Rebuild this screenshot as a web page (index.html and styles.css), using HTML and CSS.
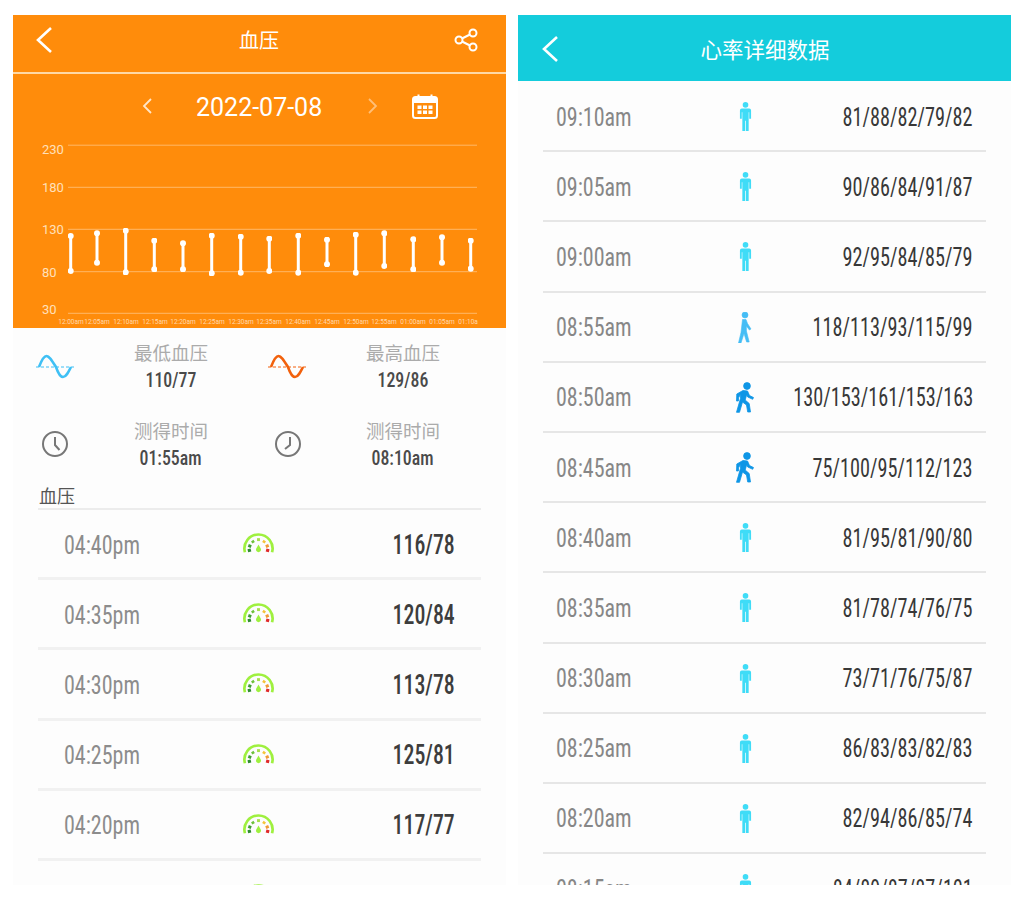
FILE: index.html
```html
<!DOCTYPE html>
<html lang="zh">
<head>
<meta charset="utf-8">
<title>血压</title>
<link rel="stylesheet" href="styles.css">
</head>
<body>
<svg class="defs" width="0" height="0">
  <defs>
    <marker id="dot" viewBox="0 0 6 6" refX="3" refY="3" markerWidth="6" markerHeight="6" markerUnits="userSpaceOnUse">
      <circle cx="3" cy="3" r="3" fill="#fff"/>
    </marker>
    <symbol id="gauge" viewBox="0 0 34 22">
      <path d="M3 20A14.500 14.500 0 1 1 31 20" fill="none" stroke="#9ff03f" stroke-width="2.800"/>
      <path d="M17 5.500v3" stroke="#a6e04a" stroke-width="3"/>
      <path d="M10.500 8l1.500 2.200" stroke="#6fc23a" stroke-width="3"/>
      <path d="M23.500 8l-1.500 2.200" stroke="#f5c33a" stroke-width="3"/>
      <path d="M6.500 13l3 1.200" stroke="#3f9e35" stroke-width="3"/>
      <path d="M27.500 13l-3 1.200" stroke="#f09a35" stroke-width="3"/>
      <path d="M6 18.500l3.200-.8" stroke="#2f8a30" stroke-width="3"/>
      <path d="M28 18.500l-3.200-.8" stroke="#e02a2a" stroke-width="3"/>
      <path d="M17 12l2.400 4.400a2.600 2.600 0 1 1-4.800 0z" fill="#9ff03f"/>
    </symbol>
    <symbol id="stand" viewBox="0 0 14 31">
      <circle cx="7" cy="3" r="3"/>
      <path d="M3 7h8a2 2 0 0 1 2 2v9h-2v-7h-.6v20H7.400V20H6.600v11H3.600V11H3v7H1V9a2 2 0 0 1 2-2z"/>
    </symbol>
    <symbol id="walk" viewBox="0 0 16 31">
      <circle cx="8" cy="3" r="3"/>
      <path d="M5.500 7.500h3.500l1.500 4 3.500 5.500-1.600 1-3-4v5l2.800 11h-2.600L7 21.500 4 31H1.500L4 20.500z"/>
    </symbol>
    <symbol id="run" viewBox="0 0 20 31">
      <circle cx="12" cy="4" r="3.400"/>
      <path d="M8 8.500l4.500.5 2 4.500 4 2-.8 1.800-5-2.300-1-2.300-1.500 5.300 4 3.500 1.300 8.500h-2.800l-1.200-7-4-3-3 10.300H1.500l4-14-.2-3.800-1.700 3.300-.2 3.200H1.500L1.800 12z"/>
    </symbol>
  </defs>
</svg>

<main class="page">
  <section class="panel">
    <header class="top top-orange">
      <svg class="back" viewBox="0 0 18 28" aria-hidden="true"><path d="M16 2L3 14l13 12" /></svg>
      <h1 class="top-title">血压</h1>
      <svg class="share" viewBox="0 0 24 24" aria-hidden="true">
        <circle cx="5" cy="12" r="3.500"/><circle cx="19" cy="5" r="3.500"/><circle cx="19" cy="19" r="3.500"/>
        <path d="M8 10.500l8-4M8 13.500l8 4"/>
      </svg>
    </header>
    <div class="date-row">
      <svg class="chev" viewBox="0 0 12 18" aria-hidden="true"><path d="M10 2L3 9l7 7"/></svg>
      <span class="date">2022-07-08</span>
      <svg class="chev chev-next" viewBox="0 0 12 18" aria-hidden="true"><path d="M2 2l7 7-7 7"/></svg>
      <svg class="cal" viewBox="0 0 26 25" aria-hidden="true">
        <rect class="cal-body" x="1" y="3" width="24" height="21" rx="2.500"/>
        <path class="cal-head" d="M1 5.500A2.500 2.500 0 0 1 3.500 3H22.500A2.500 2.500 0 0 1 25 5.500V9H1z"/>
        <path class="cal-ring" d="M6.500 0.500v3.500M19.500 0.500v3.500"/>
        <path class="cal-dots" d="M5.500 11.500h4v3.500h-4zM11 11.500h4v3.500h-4zM16.500 11.500h4v3.500h-4zM5.500 16.500h4v3.500h-4zM11 16.500h4v3.500h-4zM16.500 16.500h4v3.500h-4z"/>
      </svg>
    </div>
    <svg class="chart" viewBox="13 138 493 190" aria-hidden="true">
      <g class="grid">
        <path d="M68 145.200H477"/><path d="M68 187.300H477"/><path d="M68 229.300H477"/><path d="M68 271.700H477"/><path d="M68 313.300H477"/>
      </g>
      <g class="y-labels">
        <text x="42" y="154">230</text><text x="42" y="192">180</text><text x="42" y="234">130</text><text x="42" y="277">80</text><text x="42" y="314">30</text>
      </g>
      <g class="bars">
        <path d="M70.700 236V271"/><path d="M97 233.300V262.700"/><path d="M125.700 230.700V272.300"/><path d="M154.300 240.700V269.300"/><path d="M183 243.300V269.300"/>
        <path d="M211.700 235.700V273.300"/><path d="M240.700 236.700V272.700"/><path d="M269.300 238.700V271"/><path d="M298.300 235.700V272.700"/><path d="M327 239.700V264.300"/>
        <path d="M355.700 234.700V272.700"/><path d="M384.300 233.300V266"/><path d="M413.300 239.300V269.300"/><path d="M442 237.300V262.700"/><path d="M470.700 240.700V268.700"/>
      </g>
      <g class="x-labels">
        <text x="71" y="324">12:00am</text><text x="97" y="324">12:05am</text><text x="126" y="324">12:10am</text><text x="155" y="324">12:15am</text><text x="183" y="324">12:20am</text>
        <text x="212" y="324">12:25am</text><text x="241" y="324">12:30am</text><text x="269" y="324">12:35am</text><text x="298" y="324">12:40am</text><text x="327" y="324">12:45am</text>
        <text x="356" y="324">12:50am</text><text x="384" y="324">12:55am</text><text x="413" y="324">01:00am</text><text x="442" y="324">01:05am</text><text x="468" y="324">01:10a</text>
      </g>
    </svg>

    <div class="summary">
      <div class="stat">
        <svg class="stat-icon wave-low" viewBox="0 0 40 26" aria-hidden="true">
          <path class="wave" d="M3 13C6 5 8 2 10.500 2S15 5 20 13C22 19 24 23 27 23S32 19 35 13"/>
          <path class="wave-axis" d="M0 13H40"/>
        </svg>
        <div class="stat-text"><p class="stat-label">最低血压</p><p class="stat-value"><span class="narrow">110/77</span></p></div>
      </div>
      <div class="stat">
        <svg class="stat-icon wave-high" viewBox="0 0 40 26" aria-hidden="true">
          <path class="wave" d="M3 13C6 5 8 2 10.500 2S15 5 20 13C22 19 24 23 27 23S32 19 35 13"/>
          <path class="wave-axis" d="M0 13H40"/>
        </svg>
        <div class="stat-text"><p class="stat-label">最高血压</p><p class="stat-value"><span class="narrow">129/86</span></p></div>
      </div>
      <div class="stat">
        <svg class="stat-icon clock" viewBox="0 0 40 26" aria-hidden="true">
          <circle cx="19" cy="13" r="12"/><path d="M19 6v8l4.500 5"/>
        </svg>
        <div class="stat-text"><p class="stat-label">测得时间</p><p class="stat-value"><span class="narrow">01:55am</span></p></div>
      </div>
      <div class="stat">
        <svg class="stat-icon clock" viewBox="0 0 40 26" aria-hidden="true">
          <circle cx="20" cy="13" r="12"/><path d="M22 6v8l-5 4"/>
        </svg>
        <div class="stat-text"><p class="stat-label">测得时间</p><p class="stat-value"><span class="narrow">08:10am</span></p></div>
      </div>
    </div>

    <h2 class="list-title">血压</h2>
    <ul class="bp-list">
      <li class="bp-row"><span class="bp-time">04:40pm</span><svg class="gauge"><use href="#gauge"/></svg><span class="bp-val">116/78</span></li>
      <li class="bp-row"><span class="bp-time">04:35pm</span><svg class="gauge"><use href="#gauge"/></svg><span class="bp-val">120/84</span></li>
      <li class="bp-row"><span class="bp-time">04:30pm</span><svg class="gauge"><use href="#gauge"/></svg><span class="bp-val">113/78</span></li>
      <li class="bp-row"><span class="bp-time">04:25pm</span><svg class="gauge"><use href="#gauge"/></svg><span class="bp-val">125/81</span></li>
      <li class="bp-row"><span class="bp-time">04:20pm</span><svg class="gauge"><use href="#gauge"/></svg><span class="bp-val">117/77</span></li>
      <li class="bp-row"><span class="bp-time">04:15pm</span><svg class="gauge"><use href="#gauge"/></svg><span class="bp-val">118/79</span></li>
    </ul>
  </section>

  <section class="panel">
    <header class="top top-cyan">
      <svg class="back" viewBox="0 0 18 28" aria-hidden="true"><path d="M16 2L3 14l13 12"/></svg>
      <h1 class="top-title">心率详细数据</h1>
    </header>
    <ul class="hr-list">
      <li class="hr-row"><span class="hr-time">09:10am</span><svg class="act act-stand"><use href="#stand"/></svg><span class="hr-val">81/88/82/79/82</span></li>
      <li class="hr-row"><span class="hr-time">09:05am</span><svg class="act act-stand"><use href="#stand"/></svg><span class="hr-val">90/86/84/91/87</span></li>
      <li class="hr-row"><span class="hr-time">09:00am</span><svg class="act act-stand"><use href="#stand"/></svg><span class="hr-val">92/95/84/85/79</span></li>
      <li class="hr-row"><span class="hr-time">08:55am</span><svg class="act act-walk"><use href="#walk"/></svg><span class="hr-val">118/113/93/115/99</span></li>
      <li class="hr-row"><span class="hr-time">08:50am</span><svg class="act act-run"><use href="#run"/></svg><span class="hr-val">130/153/161/153/163</span></li>
      <li class="hr-row"><span class="hr-time">08:45am</span><svg class="act act-run"><use href="#run"/></svg><span class="hr-val">75/100/95/112/123</span></li>
      <li class="hr-row"><span class="hr-time">08:40am</span><svg class="act act-stand"><use href="#stand"/></svg><span class="hr-val">81/95/81/90/80</span></li>
      <li class="hr-row"><span class="hr-time">08:35am</span><svg class="act act-stand"><use href="#stand"/></svg><span class="hr-val">81/78/74/76/75</span></li>
      <li class="hr-row"><span class="hr-time">08:30am</span><svg class="act act-stand"><use href="#stand"/></svg><span class="hr-val">73/71/76/75/87</span></li>
      <li class="hr-row"><span class="hr-time">08:25am</span><svg class="act act-stand"><use href="#stand"/></svg><span class="hr-val">86/83/83/82/83</span></li>
      <li class="hr-row"><span class="hr-time">08:20am</span><svg class="act act-stand"><use href="#stand"/></svg><span class="hr-val">82/94/86/85/74</span></li>
      <li class="hr-row"><span class="hr-time">08:15am</span><svg class="act act-stand"><use href="#stand"/></svg><span class="hr-val">84/89/87/87/101</span></li>
    </ul>
  </section>
</main>
</body>
</html>
```

FILE: styles.css
```css
* { box-sizing: border-box; }
html, body { margin: 0; padding: 0; background: #fff; }
body {
  font-family: "Roboto", "Noto Sans CJK SC", sans-serif;
  width: 1024px;
  height: 900px;
  overflow: hidden;
}
h1, h2, p, ul { margin: 0; padding: 0; font-weight: 400; }
ul { list-style: none; }
.defs { position: absolute; }

.page {
  display: flex;
  gap: 12px;
  padding: 15px 13px;
}
.panel {
  width: 493px;
  height: 870px;
  flex: none;
  overflow: hidden;
  background: #fdfdfd;
}

/* headers */
.top {
  display: flex;
  align-items: center;
  color: #fff;
}
.top-orange {
  height: 59px;
  padding: 0 28px 7px 22px;
  background: #ff8c0b;
  border-bottom: 2px solid #ffd9a6;
}
.top-orange .back { margin-right: 11px; }
.top-cyan {
  height: 66px;
  padding: 2px 50px 0 23px;
  background: #14ccdc;
}
.back {
  width: 18px;
  height: 28px;
  margin-right: 10px;
  flex: none;
  fill: none;
  stroke: #fff;
  stroke-width: 2.600;
}
.top-title {
  flex: 1;
  text-align: center;
  font-family: "Noto Sans CJK SC", sans-serif;
  font-size: 20px;
  line-height: 28px;
}
.top-cyan .top-title { font-size: 21.500px; }
.share {
  width: 24px;
  height: 24px;
  flex: none;
  fill: none;
  stroke: #fff;
  stroke-width: 2;
}

/* date */
.date-row {
  display: flex;
  align-items: center;
  height: 64px;
  padding-left: 128px;
  background: #ff8c0b;
  color: #fff;
}
.chev {
  width: 12px;
  height: 18px;
  flex: none;
  fill: none;
  stroke: #ffe6c8;
  stroke-width: 1.800;
}
.chev-next { margin: 0 33px 0 45px; stroke: #ffbf78; }
.date {
  width: 126px;
  margin-left: 43px;
  padding-top: 3px;
  font-size: 25px;
  line-height: 30px;
  white-space: nowrap;
}
.cal { width: 26px; height: 25px; flex: none; }
.cal-body { fill: none; stroke: #fff; stroke-width: 2; }
.cal-head { fill: #fff; }
.cal-ring { stroke: #fff; stroke-width: 2; }
.cal-dots { fill: #fff; }

/* chart */
.chart {
  display: block;
  width: 493px;
  height: 190px;
  background: #ff8c0b;
}
.grid path { stroke: #ffb868; stroke-width: 1; }
.y-labels text {
  fill: #ffe0bb;
  font-size: 13px;
  font-family: "Roboto", sans-serif;
}
.bars path {
  fill: none;
  stroke: #fff;
  stroke-width: 3;
  marker-start: url(#dot);
  marker-end: url(#dot);
}
.x-labels text {
  fill: #ffd9ad;
  font-size: 6.500px;
  text-anchor: middle;
  font-family: "Roboto", sans-serif;
}

/* summary */
.summary {
  display: grid;
  grid-template-columns: repeat(2, 232px);
  row-gap: 23px;
  padding: 10px 0 0 23px;
}
.stat {
  display: flex;
  align-items: center;
  height: 55px;
}
.stat-icon {
  width: 40px;
  height: 26px;
  flex: none;
  fill: none;
}
.wave { stroke-width: 2.600; }
.wave-axis { stroke-width: 1; stroke-dasharray: 3 2; }
.wave-low { stroke: #3fc0f5; margin-top: 2px; }
.wave-high { stroke: #f2610c; margin-top: 2px; }
.clock { stroke: #777; stroke-width: 2; }
.stat-text { width: 190px; text-align: center; }
.stat-label {
  font-family: "Noto Sans CJK SC", sans-serif;
  font-size: 18.500px;
  line-height: 28px;
  color: #ababab;
}
.stat-value {
  font-family: "Roboto Condensed", "Roboto", sans-serif;
  font-size: 21px;
  font-weight: 500;
  line-height: 28px;
  color: #4a4a4a;
}
.narrow { display: inline-block; transform: scaleX(.85); }
.list-title {
  margin: 13px 0 0 26px;
  font-family: "Noto Sans CJK SC", sans-serif;
  font-size: 18px;
  line-height: 22px;
  color: #555;
}

/* lists */
.bp-list {
  margin: 2px 25px 0;
  border-top: 2px solid #ececec;
}
.bp-row {
  display: grid;
  grid-template-columns: 178px 32px minmax(0, 1fr);
  align-items: center;
  height: 70.200px;
  padding: 3px 26px 0;
  border-bottom: 3px solid #f1f1f1;
}
.bp-time {
  font-family: "Roboto Condensed", "Roboto", sans-serif;
  font-size: 25px;
  color: #8c8c8c;
  transform: scaleX(.88);
  transform-origin: left center;
  white-space: nowrap;
}
.gauge { width: 33px; height: 23px; margin-bottom: 3px; }
.bp-val {
  justify-self: end;
  margin-bottom: 2px;
  font-family: "Roboto Condensed", "Roboto", sans-serif;
  font-size: 28px;
  font-weight: 500;
  color: #3d3d3d;
  transform: scaleX(.78);
  transform-origin: right center;
  white-space: nowrap;
}
.hr-list { margin: 1px 25px 0; }
.hr-row {
  display: grid;
  grid-template-columns: 170px 38px minmax(0, 1fr);
  align-items: center;
  height: 70.200px;
  padding: 2px 13px 0;
  border-bottom: 2px solid #e6e6e6;
}
.hr-time {
  font-family: "Roboto Condensed", "Roboto", sans-serif;
  font-size: 25px;
  color: #878787;
  transform: scaleX(.88);
  transform-origin: left center;
  white-space: nowrap;
}
.act { justify-self: center; height: 31px; margin-bottom: 1px; }
.act-stand { width: 13px; fill: #3fdcf7; }
.act-walk { width: 16px; fill: #45bdf5; stroke: #45bdf5; stroke-width: .6; }
.act-run { width: 20px; fill: #0e96e6; stroke: #0e96e6; stroke-width: .8; }
.hr-val {
  justify-self: end;
  white-space: nowrap;
  font-family: "Roboto Condensed", "Roboto", sans-serif;
  font-size: 25px;
  color: #383838;
  transform: scaleX(.81);
  transform-origin: right center;
}
```
